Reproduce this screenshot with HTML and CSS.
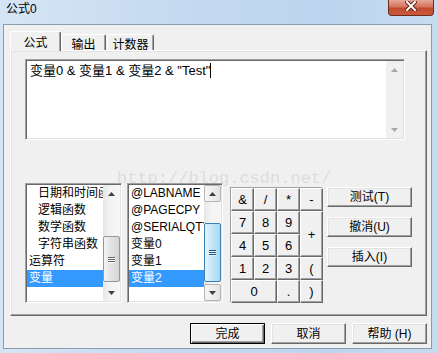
FILE: index.html
```html
<!DOCTYPE html>
<html>
<head>
<meta charset="utf-8">
<link rel="stylesheet" href="styles.css">
</head>
<body>
<div class="window">
  <div class="titlebar">
    <span class="title">公式0</span>
    <div class="close">
      <svg width="12" height="10" viewBox="0 0 12 10">
        <path d="M2 1 L10 9 M10 1 L2 9" stroke="#5a2418" stroke-width="4" stroke-linecap="square"/>
        <path d="M2 1 L10 9 M10 1 L2 9" stroke="#ffffff" stroke-width="2" stroke-linecap="square"/>
      </svg>
    </div>
  </div>
  <div class="client">
    <div class="tabs">
      <div class="tab active">公式</div>
      <div class="tab t2">输出</div>
      <div class="tab t3">计数器</div>
    </div>
    <div class="panel">
      <div class="watermark">http://blog.csdn.net/</div>
      <div class="editor">
        <div class="edit-text">变量0 &amp; 变量1 &amp; 变量2 &amp; "Test"<span class="caret"></span></div>
        <div class="vscroll disabled">
          <div class="sb-btn"><svg width="7" height="4" viewBox="0 0 7 4"><path d="M0 4 L3.5 0 L7 4 Z" fill="#a8a8a8"/></svg></div>
          <div class="sb-track plain"></div>
          <div class="sb-btn"><svg width="7" height="4" viewBox="0 0 7 4"><path d="M0 0 L3.5 4 L7 0 Z" fill="#a8a8a8"/></svg></div>
        </div>
      </div>
      <div class="lower">
        <div class="listbox l1">
          <ul class="items">
            <li class="sub">日期和时间函数</li>
            <li class="sub">逻辑函数</li>
            <li class="sub">数学函数</li>
            <li class="sub">字符串函数</li>
            <li>运算符</li>
            <li class="sel">变量</li>
          </ul>
          <div class="vscroll">
            <div class="sb-btn"><svg width="7" height="4" viewBox="0 0 7 4"><path d="M0 4 L3.5 0 L7 4 Z" fill="#404040"/></svg></div>
            <div class="sb-track"><div class="thumb th1"><span></span><span></span><span></span></div></div>
            <div class="sb-btn"><svg width="7" height="4" viewBox="0 0 7 4"><path d="M0 0 L3.5 4 L7 0 Z" fill="#404040"/></svg></div>
          </div>
        </div>
        <div class="listbox l2">
          <ul class="items">
            <li>@LABNAME</li>
            <li>@PAGECPY</li>
            <li>@SERIALQTY</li>
            <li>变量0</li>
            <li>变量1</li>
            <li class="sel">变量2</li>
          </ul>
          <div class="vscroll">
            <div class="sb-btn boxed"><svg width="7" height="4" viewBox="0 0 7 4"><path d="M0 4 L3.5 0 L7 4 Z" fill="#404040"/></svg></div>
            <div class="sb-track"><div class="thumb hot th2"><span></span><span></span><span></span></div></div>
            <div class="sb-btn boxed"><svg width="7" height="4" viewBox="0 0 7 4"><path d="M0 0 L3.5 4 L7 0 Z" fill="#404040"/></svg></div>
          </div>
        </div>
        <div class="keypad">
          <div class="key">&amp;</div>
          <div class="key">/</div>
          <div class="key">*</div>
          <div class="key">-</div>
          <div class="key">7</div>
          <div class="key">8</div>
          <div class="key">9</div>
          <div class="key tall">+</div>
          <div class="key">4</div>
          <div class="key">5</div>
          <div class="key">6</div>
          <div class="key">1</div>
          <div class="key">2</div>
          <div class="key">3</div>
          <div class="key">(</div>
          <div class="key wide">0</div>
          <div class="key">.</div>
          <div class="key">)</div>
        </div>
        <div class="side-buttons">
          <div class="btn">测试(T)</div>
          <div class="btn">撤消(U)</div>
          <div class="btn">插入(I)</div>
        </div>
      </div>
    </div>
    <div class="footer">
      <div class="btn fbtn default">完成</div>
      <div class="btn fbtn">取消</div>
      <div class="btn fbtn">帮助 (H)</div>
    </div>
  </div>
</div>
</body>
</html>
```

FILE: styles.css
```css
* { box-sizing: border-box; }
body {
  margin: 0;
  font-family: "Liberation Sans", "Noto Sans CJK SC", sans-serif;
  font-size: 12px;
  color: #000;
}
.window {
  width: 437px;
  height: 353px;
  background: linear-gradient(to right, #d6e5f5 0%, #c3d9f0 45%, #bcd5ee 75%, #c7dcf1 100%);
  display: flex;
  flex-direction: column;
  overflow: hidden;
}
.titlebar {
  height: 24px;
  flex: none;
  display: flex;
  justify-content: space-between;
  align-items: flex-start;
}
.title {
  padding: 2px 0 0 6px;
  line-height: 15px;
  font-size: 12px;
  color: #000;
}
.close {
  width: 46px;
  height: 16px;
  margin-right: 3px;
  border: 1px solid #6e2a1c;
  border-top: none;
  border-radius: 0 0 4px 4px;
  background: linear-gradient(to bottom, #e6a898 0%, #d7735c 45%, #c14a2e 55%, #c95a3c 100%);
  display: flex;
  align-items: flex-start;
  justify-content: center;
  padding-top: 1px;
}
.client {
  flex: 1;
  margin: 0 5px 4px 3px;
  border: 1px solid #8a9cb0;
  background: #f0f0f0;
  display: flex;
  flex-direction: column;
}
.tabs {
  display: flex;
  align-items: flex-start;
  height: 20px;
  margin: 6px 0 0 6px;
  position: relative;
  z-index: 2;
}
.tab {
  background: #f0f0f0;
  border-top: 1px solid #ffffff;
  border-left: 1px solid #ffffff;
  border-right: 1px solid #696969;
  box-shadow: inset -1px 0 #a0a0a0;
  border-radius: 2px 2px 0 0;
  text-align: center;
  font-size: 12px;
  line-height: 14px;
}
.tab.active {
  width: 51px;
  height: 20px;
  padding-top: 4px;
}
.tab.t2 {
  width: 45px;
  height: 16px;
  margin-top: 3px;
  padding-top: 3px;
}
.tab.t3 {
  width: 47px;
  height: 16px;
  margin-top: 3px;
  margin-left: 1px;
  padding-top: 3px;
}
.panel {
  position: relative;
  height: 266px;
  margin: -1px 4px 0 6px;
  border: 1px solid;
  border-color: #ffffff #696969 #696969 #ffffff;
  box-shadow: inset -1px -1px #a0a0a0, inset 1px 1px #e3e3e3;
  padding: 8px 0 0 14px;
}
.watermark {
  position: absolute;
  left: 106px;
  top: 119px;
  font-family: "Liberation Mono", monospace;
  font-size: 17px;
  line-height: 17px;
  color: #dddddd;
  white-space: nowrap;
}
.editor {
  position: relative;
  width: 380px;
  height: 81px;
  border: 1px solid;
  border-color: #a0a0a0 #ffffff #ffffff #a0a0a0;
  box-shadow: inset 1px 1px #696969, inset -1px -1px #e3e3e3;
  background: #fff;
  padding: 1px;
  display: flex;
}
.edit-text {
  flex: 1;
  padding: 2px 3px;
  font-size: 13px;
  line-height: 15px;
  white-space: nowrap;
}
.caret {
  display: inline-block;
  width: 1px;
  height: 15px;
  background: #000;
  vertical-align: top;
}
.vscroll {
  width: 17px;
  flex: none;
  display: flex;
  flex-direction: column;
  background: linear-gradient(to right, #e6e6e6, #f3f3f3 40%, #f6f6f6);
}
.vscroll.disabled {
  background: #f0f0f0;
}
.sb-btn {
  height: 17px;
  flex: none;
  display: flex;
  align-items: center;
  justify-content: center;
}
.sb-btn.boxed {
  border: 1px solid #b6b6b6;
  border-radius: 2px;
  background: linear-gradient(to right, #f7f7f7, #e4e4e4);
}
.sb-track {
  flex: 1;
}
.thumb {
  width: 17px;
  border: 1px solid #979797;
  border-radius: 2px;
  background: linear-gradient(to right, #f4f4f4, #e2e2e2 50%, #d4d4d4);
  display: flex;
  flex-direction: column;
  align-items: center;
  justify-content: center;
  gap: 1px;
}
.thumb span {
  display: block;
  width: 7px;
  height: 1px;
  background: #5e5e5e;
  box-shadow: 0 1px #ffffff;
}
.thumb.hot {
  border-color: #3c7fb1;
  background: linear-gradient(to right, #e3f4fc, #c4e5f6 50%, #a9d9f2);
}
.thumb.hot span {
  background: #1d5480;
  box-shadow: 0 1px #e6f5fd;
}
.th1 { margin-top: 34px; height: 46px; }
.th2 { margin-top: 21px; height: 59px; }
.lower {
  display: flex;
  align-items: flex-start;
  margin-top: 43px;
  position: relative;
}
.listbox {
  position: relative;
  height: 120px;
  border: 1px solid;
  border-color: #a0a0a0 #ffffff #ffffff #a0a0a0;
  box-shadow: inset 1px 1px #696969, inset -1px -1px #e3e3e3;
  background: #fff;
  padding: 1px;
  display: flex;
}
.l1 { width: 97px; margin-right: 5px; }
.l2 { width: 96px; margin-right: 7px; }
.items {
  list-style: none;
  margin: 0;
  padding: 0;
  flex: 1;
  overflow: hidden;
  min-width: 0;
}
.items li {
  height: 17px;
  line-height: 17px;
  padding-left: 2px;
  white-space: nowrap;
  overflow: hidden;
  font-size: 12px;
}
.items li.sub { padding-left: 11px; }
.items li.sel {
  background: #3399ff;
  color: #fff;
}
.keypad {
  position: relative;
  margin-top: 4px;
  margin-right: 5px;
  width: 92px;
  height: 115px;
  display: grid;
  grid-template-columns: repeat(4, 23px);
  grid-template-rows: repeat(5, 23px);
  border-left: 1px solid #a0a0a0;
  border-top: 1px solid #a0a0a0;
}
.key {
  background: #f0f0f0;
  border: 1px solid;
  border-color: #ffffff #696969 #696969 #ffffff;
  box-shadow: inset -1px -1px #a0a0a0;
  display: flex;
  align-items: center;
  justify-content: center;
  font-size: 13px;
  line-height: 13px;
}
.key.tall { grid-row: span 2; }
.key.wide { grid-column: span 2; }
.side-buttons {
  position: relative;
  margin-top: 4px;
  width: 85px;
  display: flex;
  flex-direction: column;
  gap: 10px;
}
.btn {
  height: 20px;
  background: #f0f0f0;
  border: 1px solid;
  border-color: #ffffff #696969 #696969 #ffffff;
  box-shadow: inset -1px -1px #a0a0a0, inset 1px 1px #e3e3e3;
  display: flex;
  align-items: center;
  justify-content: center;
  font-size: 12px;
  line-height: 14px;
}
.footer {
  display: flex;
  justify-content: flex-end;
  gap: 6px;
  margin: 7px 4px 0 0;
}
.fbtn {
  width: 75px;
  height: 21px;
}
.fbtn.default {
  border: 1px solid #000;
  box-shadow: inset 1px 1px #ffffff, inset -1px -1px #696969, inset -2px -2px #a0a0a0;
}
```
